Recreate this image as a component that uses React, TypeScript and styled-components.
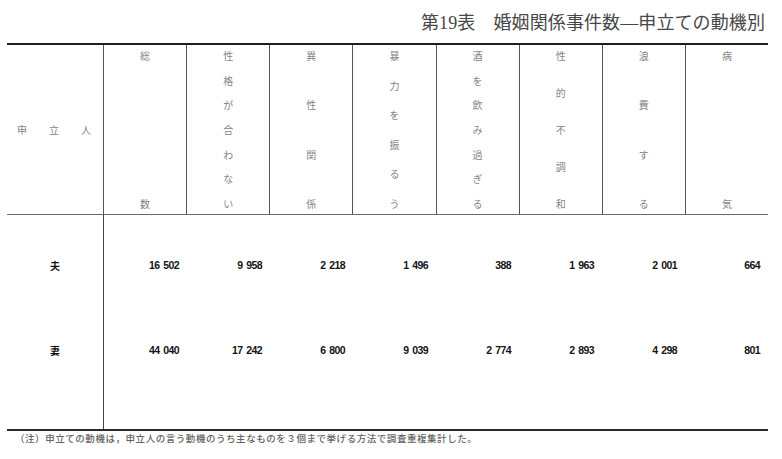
import React from 'react';
import styled, { createGlobalStyle } from 'styled-components';

const GlobalStyle = createGlobalStyle`
  html, body {
    margin: 0;
    padding: 0;
    background: #ffffff;
  }
  body {
    font-family: "Noto Sans CJK JP", "Liberation Sans", sans-serif;
  }
`;

const Page = styled.div`
  width: 782px;
  height: 459px;
  overflow: hidden;
  background: #fff;
`;

const TitleBar = styled.div`
  height: 43px;
  display: flex;
  align-items: center;
  justify-content: flex-end;
  padding: 0 17px 2px 0;
  box-sizing: border-box;
`;

const Title = styled.h1`
  margin: 0;
  font-family: "Liberation Serif", "Noto Sans CJK JP", serif;
  font-weight: 400;
  font-size: 18px;
  color: #474747;
  letter-spacing: 0.1px;
`;

const Table = styled.div`
  margin-left: 7px;
  width: 761px;
  border-top: 2px solid #1e1e1e;
  border-bottom: 2px solid #2a2a2a;
`;

const HeaderRow = styled.div`
  display: flex;
  height: 170px;
  border-bottom: 1px solid #6a6a6a;
  box-sizing: border-box;
`;

const StubHead = styled.div`
  width: 96px;
  flex-shrink: 0;
  display: flex;
  align-items: center;
  justify-content: space-between;
  padding: 0 12px 0 10px;
  box-sizing: border-box;
  font-size: 10px;
  color: #858585;
`;

const HeadCells = styled.div`
  flex: 1;
  display: grid;
  grid-template-columns: repeat(8, 1fr);
`;

const HeadCell = styled.div`
  border-left: 1px solid #555;
  display: flex;
  flex-direction: column;
  align-items: center;
  justify-content: space-between;
  padding: 6px 0 5px;
  font-size: 10px;
  line-height: 10px;
  color: #858585;
`;

const Body = styled.div`
  display: flex;
  height: 214px;
`;

const StubColumn = styled.div`
  width: 96px;
  flex-shrink: 0;
  display: flex;
  flex-direction: column;
  gap: 65px;
  padding-top: 40px;
  box-sizing: border-box;
`;

const StubLabel = styled.div`
  height: 20px;
  display: flex;
  align-items: center;
  justify-content: center;
  font-size: 10px;
  font-weight: 700;
  color: #111;
`;

const DataArea = styled.div`
  flex: 1;
  border-left: 1px solid #444;
  display: flex;
  flex-direction: column;
  gap: 65px;
  padding-top: 40px;
  box-sizing: border-box;
`;

const DataRow = styled.div`
  display: grid;
  grid-template-columns: repeat(8, 1fr);
  height: 20px;
`;

const Num = styled.div`
  display: flex;
  align-items: center;
  justify-content: flex-end;
  padding-right: 8px;
  font-family: "Liberation Sans", Arial, sans-serif;
  font-size: 10.5px;
  font-weight: 700;
  color: #141414;
  word-spacing: 1.5px;
  letter-spacing: -0.6px;
`;

const Note = styled.p`
  margin: 1px 0 0 15px;
  font-size: 9.5px;
  font-weight: 500;
  line-height: 13px;
  color: #636363;
  letter-spacing: 0.55px;
`;

const headers = [
  '総数',
  '性格が合わない',
  '異性関係',
  '暴力を振るう',
  '酒を飲み過ぎる',
  '性的不調和',
  '浪費する',
  '病気',
];

const rows = [
  { label: '夫', values: ['16 502', '9 958', '2 218', '1 496', '388', '1 963', '2 001', '664'] },
  { label: '妻', values: ['44 040', '17 242', '6 800', '9 039', '2 774', '2 893', '4 298', '801'] },
];

export default function App() {
  return (
    <Page>
      <GlobalStyle />
      <TitleBar>
        <Title>第19表　婚姻関係事件数―申立ての動機別</Title>
      </TitleBar>
      <Table>
        <HeaderRow>
          <StubHead>
            <span>申</span>
            <span>立</span>
            <span>人</span>
          </StubHead>
          <HeadCells>
            {headers.map((h) => (
              <HeadCell key={h}>
                {Array.from(h).map((ch, i) => (
                  <span key={i}>{ch}</span>
                ))}
              </HeadCell>
            ))}
          </HeadCells>
        </HeaderRow>
        <Body>
          <StubColumn>
            {rows.map((r) => (
              <StubLabel key={r.label}>{r.label}</StubLabel>
            ))}
          </StubColumn>
          <DataArea>
            {rows.map((r) => (
              <DataRow key={r.label}>
                {r.values.map((v, i) => (
                  <Num key={i}>{v}</Num>
                ))}
              </DataRow>
            ))}
          </DataArea>
        </Body>
      </Table>
      <Note>（注）申立ての動機は，申立人の言う動機のうち主なものを３個まで挙げる方法で調査重複集計した。</Note>
    </Page>
  );
}
